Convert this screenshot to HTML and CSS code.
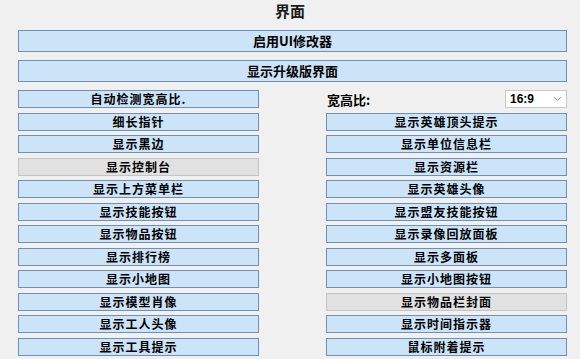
FILE: index.html
```html
<!DOCTYPE html>
<html lang="zh">
<head>
  <meta charset="UTF-8">
  <title>界面</title>
  <link rel="stylesheet" href="styles.css">
</head>
<body>
  <h1 class="title">界面</h1>
  <div class="panel">
    <button class="btn wide">启用UI修改器</button>
    <button class="btn wide">显示升级版界面</button>

    <div class="grid">
      <button class="btn">自动检测宽高比.</button>
      <div class="ratio">
        <span class="ratio-label">宽高比:</span>
        <div class="select">
          <span>16:9</span>
          <svg width="9" height="6" viewBox="0 0 9 6"><path d="M1 1 L4.5 4.5 L8 1" fill="none" stroke="#8a8a8a" stroke-width="1"/></svg>
        </div>
      </div>

      <button class="btn">细长指针</button>
      <button class="btn">显示英雄顶头提示</button>

      <button class="btn">显示黑边</button>
      <button class="btn">显示单位信息栏</button>

      <button class="btn off">显示控制台</button>
      <button class="btn">显示资源栏</button>

      <button class="btn">显示上方菜单栏</button>
      <button class="btn">显示英雄头像</button>

      <button class="btn">显示技能按钮</button>
      <button class="btn">显示盟友技能按钮</button>

      <button class="btn">显示物品按钮</button>
      <button class="btn">显示录像回放面板</button>

      <button class="btn">显示排行榜</button>
      <button class="btn">显示多面板</button>

      <button class="btn">显示小地图</button>
      <button class="btn">显示小地图按钮</button>

      <button class="btn">显示模型肖像</button>
      <button class="btn off">显示物品栏封面</button>

      <button class="btn">显示工人头像</button>
      <button class="btn">显示时间指示器</button>

      <button class="btn">显示工具提示</button>
      <button class="btn">鼠标附着提示</button>
    </div>
  </div>
</body>
</html>
```

FILE: styles.css
```css
body {
  margin: 0;
  background-color: #f0f0f0;
  font-family: "Noto Sans CJK SC", "Liberation Sans", sans-serif;
  color: #000;
}

.title {
  margin: 0 0 8px 0;
  height: 22px;
  line-height: 22px;
  font-size: 15px;
  font-weight: bold;
  text-align: center;
  color: #1a1a1a;
}

.panel {
  padding: 0 13px 0 18px;
}

.btn {
  display: block;
  width: 100%;
  height: 18px;
  padding: 0;
  margin: 0;
  font-family: inherit;
  font-size: 12px;
  font-weight: bold;
  letter-spacing: 1px;
  line-height: 16px;
  color: #000;
  background-color: #cce4f7;
  border: 1px solid #6f8fb3;
  border-radius: 0;
}

.btn.wide {
  height: 22px;
  line-height: 20px;
  font-size: 13px;
  letter-spacing: 0;
  margin-bottom: 8px;
}

.btn.off {
  background-color: #e1e1e1;
  border-color: #c4c4c4;
}

.grid {
  display: grid;
  grid-template-columns: 241px 241px;
  column-gap: 67px;
  grid-auto-rows: 18px;
  row-gap: 4.5px;
}

.ratio {
  display: flex;
  align-items: center;
  justify-content: space-between;
}

.ratio-label {
  font-size: 13px;
  font-weight: bold;
  padding-left: 1px;
}

.select {
  display: flex;
  align-items: center;
  justify-content: space-between;
  box-sizing: border-box;
  width: 62px;
  height: 18px;
  padding: 0 4px 0 4px;
  background-color: #fff;
  border: 1px solid #c8c8c8;
  font-size: 12px;
  font-weight: bold;
  font-family: "Liberation Sans", sans-serif;
}
```
